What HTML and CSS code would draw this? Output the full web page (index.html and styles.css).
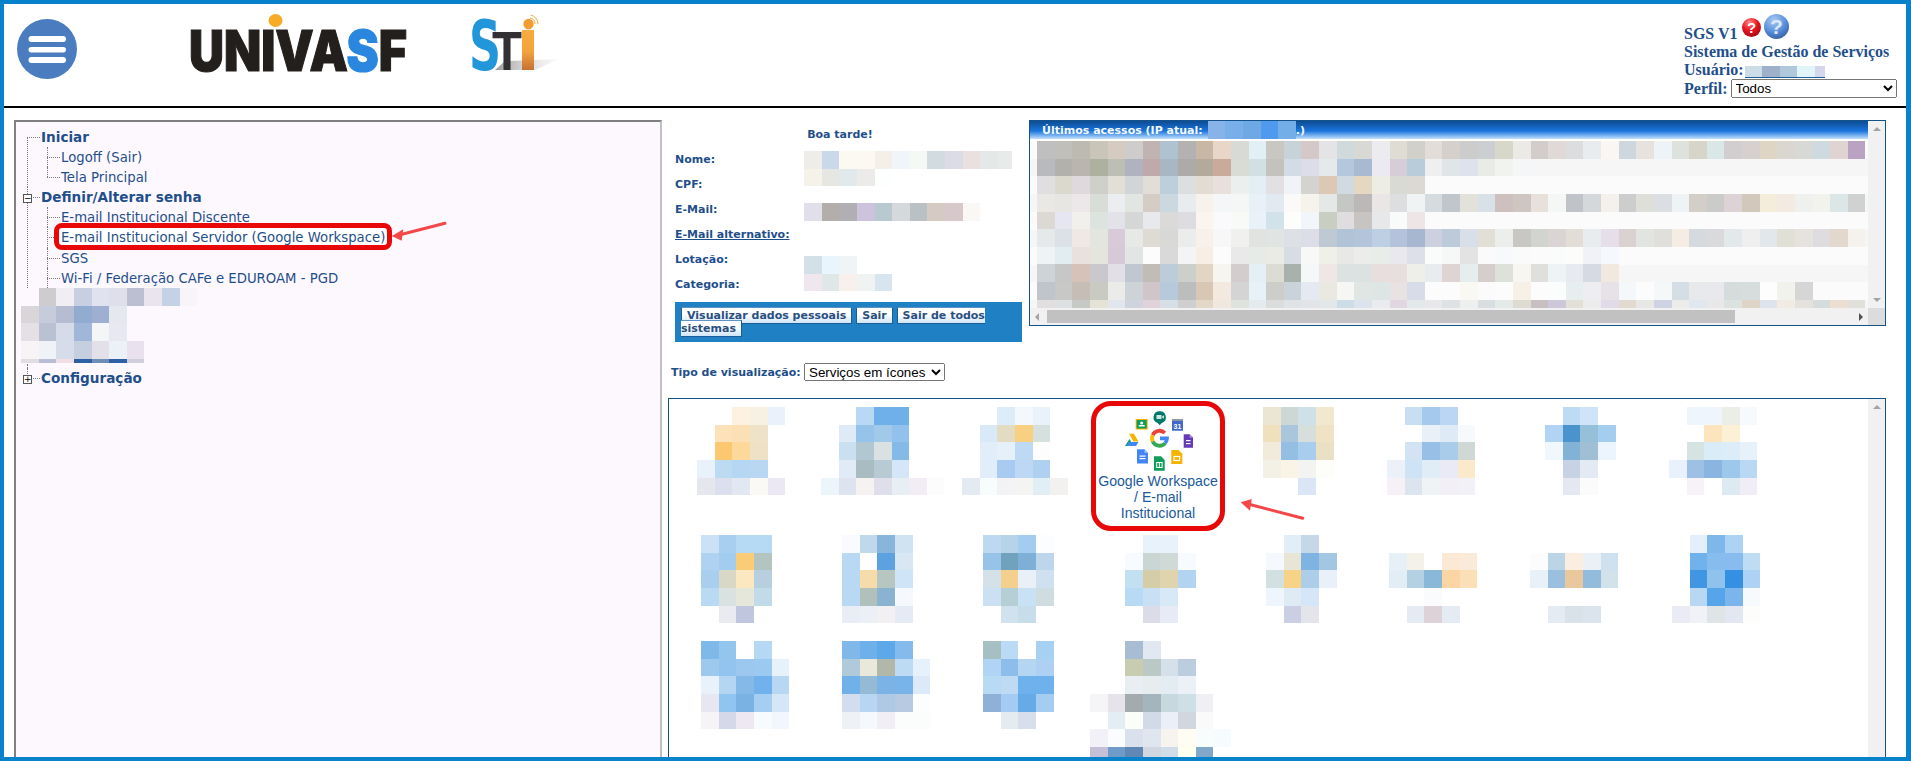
FILE: index.html
```html
<!DOCTYPE html>
<html lang="pt-BR">
<head>
    <meta charset="UTF-8">
    <meta name="viewport" content="width=device-width, initial-scale=1.0">
    <title>SGS - Sistema de Gestão de Serviços</title>
    <link rel="stylesheet" href="styles.css">
</head>
<body>
<div class="frame">
    <!--top bar with menu button, logos and user block-->
    <header class="topbar">
        <svg class="menu-btn" width="60" height="60" viewBox="0 0 60 60">
            <circle cx="30" cy="30" r="30" fill="#4a7cbf"/>
            <rect x="11.500" y="17" width="37.500" height="6" rx="3" fill="#fff"/>
            <rect x="11.500" y="28" width="37.500" height="5.500" rx="2.700" fill="#fff"/>
            <rect x="11.500" y="38" width="37.500" height="6" rx="3" fill="#fff"/>
        </svg>
        <svg class="logo-univasf" width="226" height="62" viewBox="0 0 226 62">
            <ellipse cx="90.500" cy="6.500" rx="7" ry="6.500" fill="#f7ab27"/>
            <text x="4" y="57" class="logo-word" textLength="218" lengthAdjust="spacingAndGlyphs">UNIVA<tspan fill="#2a86de" stroke="#2a86de">S</tspan>F</text>
        </svg>
        <svg class="logo-sti" width="96" height="62" viewBox="0 0 96 62">
            <defs>
                <linearGradient id="stiI" x1="0" y1="0" x2="0" y2="1">
                    <stop offset="0" stop-color="#f9ab3c"/>
                    <stop offset="0.55" stop-color="#f2a33c"/>
                    <stop offset="1" stop-color="#c66f36"/>
                </linearGradient>
                <linearGradient id="stiShadow" x1="0" y1="0" x2="1" y2="0">
                    <stop offset="0" stop-color="#9a9a9a"/>
                    <stop offset="1" stop-color="#e6e6e6" stop-opacity="0.2"/>
                </linearGradient>
            </defs>
            <polygon points="40,47 94,45 70,56 30,56" fill="url(#stiShadow)"/>
            <text x="4" y="56" class="logo-s" textLength="32" lengthAdjust="spacingAndGlyphs">S</text>
            <text x="27" y="56" class="logo-t" textLength="30" lengthAdjust="spacingAndGlyphs">T</text>
            <rect x="57" y="16" width="12" height="40" fill="url(#stiI)"/>
            <circle cx="63.500" cy="10" r="5.200" fill="#f39c32"/>
            <path d="M65 4a6 6 0 0 1 5 6M65.600 1.100a9 9 0 0 1 7.400 8.900" fill="none" stroke="#f3a64a" stroke-width="1"/>
        </svg>
        <div class="sys-info">
            <div class="sys-title">
                <span>SGS V1</span>
                <svg class="help-red" width="19" height="19" viewBox="0 0 19 19">
                    <defs>
                        <radialGradient id="ballRed" cx="0.4" cy="0.25" r="0.8">
                            <stop offset="0" stop-color="#ff8a8a"/>
                            <stop offset="0.5" stop-color="#ea1520"/>
                            <stop offset="1" stop-color="#a00812"/>
                        </radialGradient>
                    </defs>
                    <circle cx="9.500" cy="9.500" r="9.500" fill="url(#ballRed)"/>
                    <text x="9.500" y="15" class="ball-mark">?</text>
                </svg>
                <svg class="help-blue" width="25" height="25" viewBox="0 0 25 25">
                    <defs>
                        <radialGradient id="ballBlue" cx="0.4" cy="0.25" r="0.85">
                            <stop offset="0" stop-color="#a9c9f2"/>
                            <stop offset="0.55" stop-color="#5a8fdc"/>
                            <stop offset="1" stop-color="#2c5595"/>
                        </radialGradient>
                    </defs>
                    <circle cx="12.500" cy="12.500" r="12.500" fill="url(#ballBlue)"/>
                    <text x="12.500" y="20" class="ball-mark ball-big">?</text>
                </svg>
            </div>
            <div>Sistema de Gestão de Serviços</div>
            <div class="sys-row">Usuário: <span class="user-mask"><span class="mosaic" data-m="user"></span></span></div>
            <div class="sys-row">Perfil:
                <select class="profile-select"><option>Todos</option></select>
            </div>
        </div>
    </header>

    <div class="content">
        <!--left menu tree-->
        <nav class="tree-panel">
            <ul class="tree">
                <li class="first"><a class="root-link">Iniciar</a>
                    <ul>
                        <li><a>Logoff (Sair)</a></li>
                        <li class="last"><a>Tela Principal</a></li>
                    </ul>
                </li>
                <li><span class="toggle">−</span><a class="root-link">Definir/Alterar senha</a>
                    <ul>
                        <li><a>E-mail Institucional Discente</a></li>
                        <li><a class="marked">E-mail Institucional Servidor (Google Workspace)</a></li>
                        <li><a>SGS</a></li>
                        <li><a>Wi-Fi / Federação CAFe e EDUROAM - PGD</a></li>
                    </ul>
                </li>
                <li class="masked"><div class="mosaic" data-m="tree"></div></li>
                <li class="last"><span class="toggle">+</span><a class="root-link">Configuração</a></li>
            </ul>
        </nav>

        <main class="workspace">
            <div class="top-row">
                <!--logged user data-->
                <section class="user-box">
                    <div class="greeting">Boa tarde!</div>
                    <div class="data-row"><span class="data-label">Nome:</span><div class="mosaic mask-name" data-m="name"></div></div>
                    <div class="data-row"><span class="data-label">CPF:</span></div>
                    <div class="data-row"><span class="data-label">E-Mail:</span><div class="mosaic mask-mail" data-m="mail"></div></div>
                    <div class="data-row"><a class="data-label alt-mail">E-Mail alternativo:</a></div>
                    <div class="data-row"><span class="data-label">Lotação:</span><div class="mosaic mask-unit" data-m="unit"></div></div>
                    <div class="data-row"><span class="data-label">Categoria:</span></div>
                    <div class="user-actions">
                        <a class="action">Visualizar dados pessoais</a>
                        <a class="action">Sair</a>
                        <a class="action">Sair de todos sistemas</a>
                    </div>
                </section>

                <!--last logins list-->
                <section class="access-panel">
                    <div class="access-main">
                        <div class="access-title">
                            <span>Últimos acessos (IP atual:</span>
                            <div class="mosaic mask-ip" data-m="ip"></div>
                            <span class="ip-end">.)</span>
                        </div>
                        <div class="access-rows"><div class="mosaic" data-m="access"></div></div>
                    </div>
                    <div class="vbar">
                        <span class="arrow-up"></span>
                        <span class="arrow-down"></span>
                    </div>
                    <div class="hbar">
                        <span class="arrow-left"></span>
                        <span class="hbar-thumb"></span>
                        <span class="arrow-right"></span>
                    </div>
                    <div class="corner"></div>
                </section>
            </div>

            <div class="view-type">
                <label>Tipo de visualização:</label>
                <select class="view-select"><option>Serviços em ícones</option></select>
            </div>

            <!--services shown as icons-->
            <section class="services">
                <div class="service-grid">
                    <div class="mosaic" data-m="a1"></div>
                    <div class="mosaic" data-m="a2"></div>
                    <div class="mosaic" data-m="a3"></div>
                    <a class="service-marked">
                        <svg class="workspace-icons" width="72" height="64" viewBox="0 0 72 64">
                            <!--meet-->
                            <path d="M37.700 3.300a6 6 0 0 1 2 11.700l-2 2.200-2-2.200a6 6 0 0 1 2-11.700z" fill="#00796b"/>
                            <rect x="34.500" y="7" width="5" height="4" fill="#cfe8e3"/>
                            <polygon points="39.500,9 42,7.200 42,10.800" fill="#cfe8e3"/>
                            <!--classroom-->
                            <rect x="13.700" y="11" width="12" height="10.500" fill="#f4b400"/>
                            <rect x="14.700" y="12" width="10" height="8.500" fill="#0f9d58"/>
                            <circle cx="19.700" cy="15" r="1.500" fill="#fff"/>
                            <rect x="16.700" y="17" width="6" height="1.500" fill="#fff"/>
                            <!--calendar-->
                            <rect x="50" y="11" width="11" height="11.700" fill="#3f68c9"/>
                            <rect x="50" y="11" width="11" height="2" fill="#8a97ab"/>
                            <text x="55.500" y="21" class="cal-day">31</text>
                            <!--forms-->
                            <path d="M61.700 26.300h6l3.300 3.300v10.100h-9.300z" fill="#673ab7"/>
                            <path d="M67.700 26.300l3.300 3.300h-3.300z" fill="#b39ddb"/>
                            <rect x="64" y="32" width="4.500" height="1.200" fill="#fff"/>
                            <rect x="64" y="35" width="4.500" height="1.200" fill="#fff"/>
                            <!--drive-->
                            <polygon points="7.500,31 9.500,34.500 6,38 3,38" fill="#0f9d58"/>
                            <polygon points="7,25.700 12,25.700 16.500,33.500 11.500,33.500" fill="#f4b400"/>
                            <polygon points="6.500,34 16.500,34 14,38 4.500,38" fill="#4285f4"/>
                            <!--g-->
                            <path d="M42.800 25A7.500 7.500 0 0 0 30.700 27.100" fill="none" stroke="#ea4335" stroke-width="3.800"/>
                            <path d="M30.700 27.100A7.500 7.500 0 0 0 30.700 33.500" fill="none" stroke="#fbbc05" stroke-width="3.800"/>
                            <path d="M30.700 33.500A7.500 7.500 0 0 0 43.200 35.100" fill="none" stroke="#34a853" stroke-width="3.800"/>
                            <path d="M38 30.300H45A7.500 7.500 0 0 1 43.200 35.100" fill="none" stroke="#4285f4" stroke-width="3.800"/>
                            <!--docs-->
                            <path d="M15 41.300h7.500l3.500 3.500v10.700h-11z" fill="#4285f4"/>
                            <path d="M22.500 41.300l3.500 3.500h-3.500z" fill="#a1c2fa"/>
                            <rect x="17.500" y="47.500" width="6" height="1.200" fill="#fff"/>
                            <rect x="17.500" y="50" width="6" height="1.200" fill="#fff"/>
                            <!--sheets-->
                            <path d="M32 48.300h7l3.700 3.700v10.700h-10.700z" fill="#0f9d58"/>
                            <rect x="34.700" y="54.500" width="5.400" height="5" fill="none" stroke="#fff" stroke-width="1"/>
                            <path d="M37.400 54.500v5" stroke="#fff" stroke-width="1"/>
                            <!--slides-->
                            <path d="M49.300 42h7.200l3.800 3.800v10.200h-11z" fill="#f4b400"/>
                            <rect x="52" y="48.500" width="5.600" height="4" fill="none" stroke="#fff" stroke-width="1.200"/>
                        </svg>
                        <span class="service-name">Google Workspace<br>/ E-mail<br>Institucional</span>
                    </a>
                    <div class="mosaic" data-m="a5"></div>
                    <div class="mosaic" data-m="a6"></div>
                    <div class="mosaic" data-m="a7"></div>
                    <div class="mosaic" data-m="a8"></div>

                    <div class="mosaic" data-m="b1"></div>
                    <div class="mosaic" data-m="b2"></div>
                    <div class="mosaic" data-m="b3"></div>
                    <div class="mosaic" data-m="b4"></div>
                    <div class="mosaic" data-m="b5"></div>
                    <div class="mosaic" data-m="b6"></div>
                    <div class="mosaic" data-m="b7"></div>
                    <div class="mosaic" data-m="b8"></div>

                    <div class="mosaic" data-m="c1"></div>
                    <div class="mosaic" data-m="c2"></div>
                    <div class="mosaic" data-m="c3"></div>
                    <div class="mosaic" data-m="c4"></div>
                </div>
                <div class="vbar service-bar"><span class="arrow-up"></span></div>
            </section>
        </main>
    </div>

    <!--red arrows that point at the marked items-->
    <svg class="callout callout-tree" width="62" height="28" viewBox="0 0 62 28">
        <path d="M57 5.300L11 17" stroke="#f4474a" stroke-width="3" stroke-linecap="round"/>
        <polygon points="3.700,18 15.300,11.300 13.700,22.700" fill="#f4474a"/>
    </svg>
    <svg class="callout callout-tile" width="72" height="32" viewBox="0 0 72 32">
        <path d="M66.700 26.300L12 12" stroke="#f4474a" stroke-width="3" stroke-linecap="round"/>
        <polygon points="4.700,10.300 15.700,7 14,18.700" fill="#f4474a"/>
    </svg>
</div>
<script src="mosaic.js"></script>
</body>
</html>
```
FILE: styles.css
```css
/*page frame*/
html, body {
    margin: 0;
    padding: 0;
    height: 100%;
    overflow: hidden;
}

.frame {
    position: relative;
    box-sizing: border-box;
    height: 100vh;
    overflow: hidden;
    background-color: #fff;
    border-style: solid;
    border-color: #0882cb;
    border-width: 4px 5px 4px 4px;
    font-family: "DejaVu Sans", sans-serif;
    color: #1f4f8b;
}

/*blurred out data, cells come from mosaic.js*/
.mosaic {
    display: grid;
    grid-auto-rows: 17.64px;
}

/*top bar*/
.topbar {
    display: flex;
    align-items: flex-start;
    height: 102px;
    border-bottom: 2px solid #000;
}

.menu-btn {
    margin: 15px 0 0 13px;
    flex: none;
}

.logo-univasf {
    margin: 10px 0 0 108px;
    flex: none;
}

.logo-sti {
    margin: 10px 0 0 54px;
    flex: none;
}

.logo-word {
    font-family: "Inter", sans-serif;
    font-weight: 900;
    font-size: 56px;
    fill: #231f1c;
    stroke: #231f1c;
    stroke-width: 1.2px;
}

.logo-s {
    font-family: "DejaVu Sans", sans-serif;
    font-weight: 700;
    font-size: 70px;
    fill: #2196d8;
}

.logo-t {
    font-family: "Liberation Sans", sans-serif;
    font-weight: 700;
    font-size: 55px;
    fill: #333033;
}

.sys-info {
    margin: 10px 0 0 auto;
    width: 222px;
    font-family: "Liberation Serif", serif;
    font-weight: 700;
    font-size: 16px;
    line-height: 18px;
}

.sys-title {
    display: flex;
    align-items: flex-start;
    height: 29px;
}

.sys-title span {
    align-self: flex-end;
}

.help-red {
    margin: 4px 0 0 4px;
}

.help-blue {
    margin-left: 3px;
}

.ball-mark {
    font-family: "Liberation Sans", sans-serif;
    font-weight: 700;
    font-size: 15px;
    text-anchor: middle;
    fill: #fff;
}

.ball-big {
    font-size: 21px;
    fill: #dbe8fa;
}

.sys-row {
    display: flex;
    align-items: center;
    gap: 3px;
}

.user-mask {
    display: block;
    width: 80px;
    height: 11px;
    margin: 3px 0 0 -2px;
    border-bottom: 1px solid #1f5fa8;
    overflow: hidden;
}

.profile-select {
    width: 166px;
    height: 19px;
    font-family: "Liberation Sans", sans-serif;
    font-size: 13.33px;
}

/*main area*/
.content {
    display: flex;
    align-items: flex-start;
    padding: 12px 20px 0 10px;
}

/*menu tree*/
.tree-panel {
    box-sizing: border-box;
    flex: none;
    width: 648px;
    height: 700px;
    padding: 5px 0 0 11px;
    border: 2px solid;
    border-color: #808080 #c0c0c0 #c0c0c0 #808080;
    background-color: #fdf8fe;
    font-size: 13.25px;
}

.tree, .tree ul {
    list-style: none;
    margin: 0;
    padding: 0;
}

.tree li {
    position: relative;
    padding-left: 14px;
    line-height: 20px;
    white-space: nowrap;
}

.tree li::before {
    content: "";
    position: absolute;
    left: 0;
    top: 10px;
    width: 13px;
    border-top: 1px dotted #777;
}

.tree li::after {
    content: "";
    position: absolute;
    left: 0;
    top: 0;
    bottom: 0;
    border-left: 1px dotted #777;
}

.tree li.first::after {
    top: 10px;
}

.tree li.last::after {
    bottom: auto;
    height: 10px;
}

.tree a {
    display: block;
}

.tree ul {
    margin-left: 6px;
}

.tree ul a {
    height: 20px;
    line-height: 22px;
}

.tree li.masked {
    height: 80px;
    margin-left: -6px;
    padding-left: 0;
    line-height: 0;
}

.tree li.masked::before {
    display: none;
}

.tree li.masked::after {
    left: 6px;
    top: 76px;
}

.tree li.masked .mosaic {
    height: 75px;
    overflow: hidden;
}

.tree .root-link {
    font-weight: 700;
    font-size: 13.6px;
}

.toggle {
    position: absolute;
    z-index: 1;
    left: -4px;
    top: 7px;
    box-sizing: border-box;
    width: 9px;
    height: 9px;
    border: 1px solid #555;
    background-color: #fff;
    color: #000;
    font-size: 9px;
    line-height: 7px;
    text-align: center;
}

.tree .marked {
    position: relative;
    z-index: 0;
    display: inline-block;
}

.marked::after {
    content: "";
    position: absolute;
    z-index: -1;
    inset: -4px -7px -3px -7px;
    border: 5px solid #e80808;
    border-radius: 8px;
    background-color: #fff;
}

/*right side*/
.workspace {
    flex: 1;
    min-width: 0;
    padding-left: 6px;
}

.top-row {
    display: flex;
    align-items: flex-start;
    height: 222px;
    margin-left: 7px;
    gap: 7px;
}

.user-box {
    flex: none;
    width: 347px;
    font-size: 11px;
    font-weight: 700;
}

.greeting {
    height: 26px;
    padding-right: 17px;
    line-height: 29px;
    text-align: center;
}

.data-row {
    display: flex;
    align-items: flex-start;
    height: 25px;
    line-height: 27px;
}

.data-label {
    flex: none;
    width: 129px;
}

.alt-mail {
    text-decoration: underline;
}

.mask-name {
    width: 208px;
    margin-top: 5px;
    overflow: hidden;
}

.mask-mail {
    margin-top: 7px;
}

.mask-unit {
    margin-top: 10px;
}

.user-actions {
    box-sizing: border-box;
    height: 40px;
    margin-top: 6px;
    padding: 7px 6px;
    background-color: #1f80c4;
    line-height: 13px;
}

.action {
    padding: 1px 5px;
    border: 1px solid #1c5c98;
    border-top-color: #5c92c4;
    background: linear-gradient(#ffffff 40%, #cfe5f8);
    color: #2a4f80;
}

.access-panel {
    box-sizing: border-box;
    flex: none;
    display: grid;
    grid-template-columns: 1fr 17px;
    grid-template-rows: 1fr 17px;
    width: 857px;
    height: 206px;
    border: 1px solid #14528c;
}

.access-main {
    min-width: 0;
    overflow: hidden;
}

.access-title {
    display: flex;
    align-items: center;
    height: 18px;
    padding-left: 12px;
    background: linear-gradient(#0d4c90, #1a74de 55%, #c2e0fc);
    color: #f4f9ff;
    font-size: 11px;
    font-weight: 700;
}

.mask-ip {
    margin-left: 5px;
}

.access-rows {
    height: 170px;
    margin-top: 2px;
    padding-left: 7px;
    overflow: hidden;
    background: repeating-linear-gradient(#fbfbfb 0 18px, #f6f6f6 18px 35.3px);
}

.vbar {
    display: flex;
    flex-direction: column;
    justify-content: space-between;
    align-items: center;
    padding: 6px 0;
    box-sizing: border-box;
    background-color: #f1f1f1;
}

.arrow-up, .arrow-down {
    width: 0;
    height: 0;
    border-left: 4px solid transparent;
    border-right: 4px solid transparent;
}

.arrow-up {
    border-bottom: 4px solid #a3a3a3;
}

.arrow-down {
    border-top: 4px solid #a3a3a3;
}

.hbar {
    display: flex;
    align-items: center;
    background-color: #f1f1f1;
}

.arrow-left, .arrow-right {
    width: 0;
    height: 0;
    border-top: 4px solid transparent;
    border-bottom: 4px solid transparent;
}

.arrow-left {
    margin-left: 5px;
    border-right: 4px solid #a3a3a3;
}

.hbar-thumb {
    width: 688px;
    height: 13px;
    margin-left: 8px;
    background-color: #c1c1c1;
}

.arrow-right {
    margin-left: auto;
    margin-right: 5px;
    border-left: 4px solid #505050;
}

.corner {
    background-color: #dcdcdc;
}

.view-type {
    display: flex;
    align-items: center;
    height: 18px;
    margin: 21px 0 17px 3px;
    font-size: 11px;
    font-weight: 700;
}

.view-type label {
    width: 133px;
}

.view-select {
    width: 141px;
    height: 18px;
    font-family: "Liberation Sans", sans-serif;
    font-size: 13.33px;
}

/*services list*/
.services {
    display: flex;
    height: 400px;
    border: 1px solid #14528c;
    overflow: hidden;
}

.service-grid {
    flex: 1;
    display: grid;
    grid-template-columns: repeat(8, 141px);
    grid-template-rows: 128px 106px 120px;
    align-items: start;
    justify-items: start;
    padding: 8px 0 0 1px;
}

.service-bar {
    flex: none;
    width: 17px;
    justify-content: flex-start;
}

.service-marked {
    box-sizing: border-box;
    display: flex;
    flex-direction: column;
    align-items: center;
    width: 134px;
    height: 130px;
    margin: -6px 0 0 -2px;
    padding-top: 2px;
    border: 5px solid #e80808;
    border-radius: 20px;
    font-family: "Liberation Sans", sans-serif;
}

.workspace-icons {
    flex: none;
}

.cal-day {
    font-family: "Liberation Sans", sans-serif;
    font-size: 7px;
    font-weight: 700;
    text-anchor: middle;
    fill: #fff;
}

.service-name {
    margin-top: 1px;
    font-size: 14.1px;
    line-height: 16px;
    text-align: center;
    white-space: nowrap;
    color: #1a5a9e;
}

/*annotations*/
.callout {
    position: absolute;
}

.callout-tree {
    left: 384px;
    top: 214px;
}

.callout-tile {
    left: 1232px;
    top: 488px;
}
```
FILE: mosaic.js
```js
//colour cells of the blurred out data, "." is an empty cell
const mosaics = {
    user: { rows: ['ccdde8 9fb0cb b0c8dc e1f5f8 d4d7ec'] },
    tree: { rows: [
        '. cfcccf f0eef3 c9cfe2 e0e3ef dedfea bcbfd2 eae4ee c5d2e6 f7f5f9',
        'd9d5d8 c6ccdc b6bdd3 92abd0 9eafd1 e6e8f0',
        'e5e0e6 b9c1d3 d5dbe8 a0b7d9 f4f5f7 e8e8f2',
        'f8f4f6 eff2f7 d7dcea c6cfe0 e4e0e9 ebf1f7 e9e2ee',
        'e2dde2 b8bfd4 f1dfe6 2d5fa5 6e8eb5 2d5fa5 d0cddc'
    ] },
    name: { rows: [
        'eeede9 c9d9ea fcf9f3 fcf9f3 f5efea f0f5f9 f5f9f6 d2dce0 dcdce6 e9e0df e5e8e9 e8ebea',
        'f5f2ea e6e6e3 e2e9ed ecebe9 fdfefe'
    ] },
    mail: { rows: ['e1dfea b3aeaa b1afb3 cdc3dd b8c9d0 d5d9dc b9c1c4 d5cbc4 d7c9cb fbf7f4'] },
    unit: { rows: [
        'd3e0e7 e9f5fc eff4f7',
        'efe6ee e0e7e7 f8f0ec eff3f1 d9e5ee'
    ] },
    ip: { rows: ['87b3e9 78aeea 6ea8e5 4f9aec 74aee6'] },
    access: { rows: [
        'bfbfc0 c0bfba bdbab2 c9c6b9 d5cbc0 cfcdcc c0b3b1 aec2d0 b4b2b0 c9b7a5 e8d6c9 d8dad6 e2eff5 c8c7c1 c8d2d9 d4c8c8 e4e4e6 d0dadc d8d9d5 ecebef dedcd3 d1d0ca e2ddd8 d5d0cb cccccc cbcfd2 d7d7ca ebeae6 d2cdca e1d8d8 dcdddf e8ecef f9f6f3 ced7de e7e2de eef3f7 dde2dc d7d5c9 d9e8e7 d2cdce d6d1ce dfd5c5 dad7d1 d6d9d5 cfdae0 dfd4d2 baa2c3',
        'b8babd b2b1ab bab5af aeb0a0 bdbeb6 b0b3bf bfa9ab a9b6c3 aeaaa8 b3aa9c c9aa9b d8dcd4 d2e0e3 c3c2bd d2dbe6 dcdde8 e6e9ec b3c8dc a8bad2 ebeaf0 d7cdd8 b7cdda efefef e0e5e7 dde2ec e9ebe7 f1f3ee f5f6f8',
        'e0dede dbd9ce dfd9dd ced0c9 e2dfd7 d1d5d7 e3ddd7 bccfdb dcdee0 e3dcd2 e9dfdb ebf0ee e4eff5 e3e0e3 f0f3f7 d5d3cf dcc8b5 d1dae1 e5d8c2 eeede3 d9dad3 dcd9d2',
        'eae8e5 e8e6e2 ece8ea d9ddd8 ecedf1 e1e6e3 d5ccc6 cbd8df e8ecee f7f2ec f5f6f8 f4f7f6 e9f1f8 e2e9f0 fbfaf8 f6f3ec e4e8e7 c5c7c5 bcb8b8 ebe6e6 dddee0 f0f3f3 d6dbdf c0c6cc e2e2da d9e1e8 cfc0c0 d0c6c1 e8e0db f4f7f6 c0c3c7 d4d8db f4f1ec cdcdce dfdfda dbdee2 eef3f6 d3cfc8 cbccc9 ddd2d5 d2c8bc f4edda f3ebe2 eff1ef f2f3ec dde6e7 cfd2d0',
        'dcd8d4 e6e6f2 f1f0ec dde4df e2e2e8 d4d7d6 e8e9ed dbdad8 dddde1 fbf5ef fafafc f7faf7 e9f1f9 d2e2ea fdfdfc f2f6fb c9cec3 dfdde0 c7c4c1 e6e8ea f9fbfb eee6e6',
        'e6e9e9 dbe0e9 efe8e4 e3e6de d9cad9 e6e9e6 dedbd4 d8d8d6 ebecec f8f0ea f7f7f7 f0f0ee e0e3e0 e0e4e3 dde1e5 dddde8 bfc9d3 b1c4d7 b4c4da bdcfe3 b4c3db a6b7cf cdd0de bccada d8dfe9 e2dfd6 ebeeeb c9c7c3 d1d4cf dad5d4 e2ddd7 e8ecee e6dfe9 d9d2d0 e2e4e2 e0dfdc f5ece4 d4dadd dadadc e3e8ea efefef e2e7eb e0e0d7 e6e2de dfdcdf e2d8cd f5f2ed',
        'eef3f6 e1edf1 eae0dc e4e6de d8c9d9 e1e5e3 fcfcfc d8d9d8 f3f4f5 f7efe6 fdfcfc e9e9e9 e6ebe8 ebebe5 d7dde3 f7f8f7 eff0e8 e8e8e6 ecedeb e9edea e9e9ed dde0e9 fafbfb f6f8f7 e3e3e3 fafafa f7f9fa fafafa fbfbfb fafcfb fcfcfb f1f2f7 f5f9fd',
        'cdd3d7 c6c7c6 d6c2b8 c8c8cd e2e0e6 c0c7d1 c2bcb6 bccdd9 cdcfca e2d5c4 f7f5f0 d3cdcd e5f0f6 dcdcd4 a8b1ac f5f8f8 efe7e6 dce2e2 dce2e1 e8dedd e8dede eeefe8 e8ecef dfd4d4 e5edef d6cecc dee0da f7f6f1 dfe0db eef3f6 e7ebef d4dbe2 f1e8e0',
        'c0c5cc c8c9c6 c6bdb6 c9cac2 ebebe9 cdd3d7 d0c5c8 b6cadb bcbdbd d8c7b5 f4e9df d4d4d4 e6f2f8 cdcdc9 cad3da e5e9f1 e9e9e2 f6f6f4 dfe6e3 dde5e5 e8e2e3 d8dbe8 fcfcfc fcfcfc f9f8f3 fbfbfb fcfcfc f6f0e6 fcfcfc fbfcfc e7eef0 eeedf2 e6e2e8 f4f8fa fcfcfc f4f8f9 d6dee5 e7e9eb e9e9ed d5dcdb d7dddc fcfdfc f2f2ec d6d6d6',
        'e1dfe0 dee1e2 c6c9c6 e5e3d5 e1e6ee ced3de e1d2da d6dee6 cfcfcf e3d7c8 f0e8df e0e2e0 e3ebee dbdcdc dfe3e6 e2e4ea e2e7ea cddde7 dce3ec eaebee e1d7e3 e2e9e8 e8e8ea dfe2e5 eef0ef d9dee0 e3eae8 dedcd2 c7bfc0 ccc8d9 e3e1d7 ececec e1dbe9 e2dace e7e8e5 cfd2e3 ececea e0e7ee e8e8e8 dce2e0 ded5c8 dee3ee f1ebe4 e4e2dc d6dcdc ecdfd2 e2e0da'
    ] },
    a1: { dx: 27, rows: [
        '. . fdf2e2 f7f1e3 e9f2fa',
        '. fbe2b8 fbe0b6 eee2c8 .',
        '. fbc76f fcd99b eee1c5 .',
        'e9f2fb bcdaf1 b5d7f4 b9d7f3 .',
        'e6e6ee dbdfee e2e8f2 faf9f6 ebe8f3'
    ] },
    a2: { dx: 10, rows: [
        '. . b9d8f4 6fb0ea 6fb0ea . .',
        '. deeaf5 96c3e9 a0c9ea 91c1ec . .',
        '. cadff0 b1c8d2 d9e1e2 85b9e8 . .',
        '. e0ebf7 a9bcc2 b8cbd4 d6e6f9 . .',
        'ebf5fa dde3ef f6f2f1 dfdeeb e7eff4 f2edf4 fbfcfb'
    ] },
    a3: { dx: 10, rows: [
        '. . dcecf8 f3f8fd e9f1fb .',
        '. d9e9f7 e3dcc2 f9cf82 d6e0df .',
        '. e1eefa e5f0f9 bdd9f4 fdfdfd .',
        '. e1edf9 a9cbf2 bdd8f5 afd0f1 .',
        'e4eaf2 f7fcfc f3f2f4 f4f4f3 e2eef6 f3f0f0'
    ] },
    a5: { dx: 29, rows: [
        'ebe5d3 ccd7d6 cfe0e8 f2e7cf',
        'f0e1bd a8c6dc d6dfdc f0e2c4',
        'f2ebdb 92bfe2 a9cdec e9e0c6',
        'f3f1e6 f9f4e5 f3f3f1 fdfdfa',
        '. . dae6f6 .'
    ] },
    a6: { dx: 12, rows: [
        '. c8def3 a5c9ed bad6f4 .',
        '. . e9f0f8 deeaf6 f6fafd',
        '. d2e3f4 98c0e6 a9cceb d0d8d6',
        'ecf0f8 cee4f6 e0ecf6 e9eaf6 fbe9cb',
        'f6f1f6 dce5ef f0f3f5 f2f0f6 f2f1f7'
    ] },
    a7: { dx: 29, rows: [
        '. bedbf6 cfe3f9 .',
        'b1d4f4 4a93cc 96bfda a5cdf0',
        'f0f7fd 82b2d6 a0bfd5 ecf4fd',
        '. c7d3e5 e4eaf4 .',
        '. e6e8f1 fbfbfc .'
    ] },
    a8: { dx: 12, rows: [
        '. eef5fc eef5fc ebeee6 f6fafd',
        '. . fce5bd fcf0d6 .',
        '. d6e3e3 dbecf9 dcecf9 e7f1f9',
        'e9f2fc 9fc0e5 8ab5e1 9dc7eb b9d8f4',
        '. f6f2f7 . deeaf1 f0edf7'
    ] },
    b1: { dx: 31, rows: [
        'cbe1f5 a9cff0 b6d9f4 b6d9f4',
        'afd2f2 a3cdf0 fbcc78 b4c4c0',
        'a9cfee d9d8c6 fce8c0 b8cfdf',
        'b9daf2 d9e1e1 e6e7db c1dbe8',
        '. e9ebf0 c0c6dd .'
    ] },
    b2: { dx: 31, rows: [
        'f9fbfe c0d9ea 88b5da d0e3f3',
        'b9d8f4 . 5ca2e0 d9e7f3',
        'b9d8f4 f5dcaa b7c6c0 cfe4f6',
        'b9d8f4 b0c0ba 89b3d0 f5f9fd',
        'e9edf6 edeff7 f2f0f3 e4ebf4'
    ] },
    b3: { dx: 31, rows: [
        'bdd8f0 b6d3ea a3cdf0 fbfdfe',
        '98c3e8 70a2bd 7eb0d7 bcd7ec',
        'd5e1e8 f3d08e e9f0f7 cfe1f1',
        'cce0f4 b6ced6 c9e1f5 d0dde0',
        '. d0e2ed c7dde9 .'
    ] },
    b4: { dx: 32, rows: [
        '. e8f2fb e8f2fb .',
        'f7fafe c9d6d4 cfd9d6 f7fafe',
        'c3dff2 d5cca8 e0d4ae b2d4f1',
        'b8daf4 c8dff4 d7e8f7 .',
        '. dcdce8 e6ebf5 .'
    ] },
    b5: { dx: 32, rows: [
        '. e1edf7 c5d8e8 .',
        'f5f8fc e8e5d6 7fb4e2 a3c6e2',
        'd3e0e1 f6d386 accee8 e9f0fa',
        'eff5fc deeaf4 d5e6f8 .',
        '. cbcfe3 e3e5eb .'
    ] },
    b6: { dx: 14, rows: [
        '. . . . .',
        'e7eff7 f4f2e8 . fce9d3 faeada',
        'e3edf6 b4d1e3 8ab8d9 fbd5a3 fbdfb6',
        '. . f9fbfc . .',
        '. e5ebf3 dcd2d7 e5ebf2 .'
    ] },
    b7: { dx: 14, rows: [
        '. . . . .',
        'fbfcfb bbd4e6 fbeee0 e9f1f6 cfe1ee',
        'e9f1f8 9abfdf e8c89c 93bbdc d2e2eb',
        '. . . . .',
        '. e5ebf3 d8e2e8 dbe3ec .'
    ] },
    b8: { dx: 15, rows: [
        '. e3effa 7eb8ea acd3f3 .',
        '. 70b2ec 86bcee 89bcee bfdcf5',
        '. 4096e2 90c2ee 3490e2 aed2f5',
        '. b7d7f3 56a5e8 7ab5ec f6fafd',
        'ebebf5 f1f2f7 dfe5e7 e2e7f2 fdfdfb'
    ] },
    c1: { dx: 31, rows: [
        '7fb9ea 94c5ec . b5d8f4 .',
        '9ec9ee 92c4ef 9cc8ef 9cc9f0 e7f1fa',
        'e9f2fb b5d6f2 85b9e8 71b1ec b8d7f3',
        'e5e7f1 90c5f2 7ab2e4 a6cef2 d5e6f7',
        'f6f4f6 d4d9ea eee9f0 f8fbfe f1f7fd'
    ] },
    c2: { dx: 31, rows: [
        '81b8ea 6eb0ea 5ca8e8 85baec .',
        'b0cadb e9e8da b1b8aa bddbf3 e7f1fb',
        '71b1ea 95bad6 7cb3e6 78b4ea dbe9f9',
        'd2ddef b8d5f4 aec8e6 b8c9e2 fcfefe',
        'eef2f6 f5f9fd f2eef5 fbfdfd fbfdfd'
    ] },
    c3: { dx: 31, rows: [
        'a6bfc2 bbdaf5 . a7d1f3',
        'b1d3f4 8cbdeb b5d6f3 add0f3',
        'b9daf5 bfdbf3 6fb1ec 6fb1ec',
        '8fb1d8 a4cbf3 66abe8 a5cdf2',
        '. e4ebf1 d7dfec .'
    ] },
    c4: { dx: -3, rows: [
        '. . a8bcd4 e2e8f1 . . . .',
        '. . c8ccb0 bbc9c6 d6e0eb bccde0 . .',
        '. . e9eef2 e7ecef e2ecf2 ebf1f7 . .',
        'f5f4f7 e7e3ea a4abaf a5b5be c8d8df cee0e5 f0eff4 .',
        '. e2eef3 fbfdf9 d3dae7 ebeff8 d2d6de fafafa .',
        'f2f1f8 fafcfd dae1ed dfe6ef f7f4ef fffcf4 f8fcfd f6fcfe',
        'c5bfd8 6f9bc8 6187b5 d0d7e0 d0dde8 fffff0 81a8c8 .'
    ] }
};

//fill every mosaic element with its cells
document.querySelectorAll('.mosaic').forEach(el => {
    const data = mosaics[el.dataset.m];
    const rows = data.rows.map(row => row.split(' '));
    const cols = Math.max(...rows.map(row => row.length));

    el.style.gridTemplateColumns = `repeat(${cols}, 17.64px)`;
    if (data.dx) {
        el.style.marginLeft = `${data.dx}px`;
    }

    rows.forEach(row => {
        for (let i = 0; i < cols; i++) {
            const cell = document.createElement('span');
            if (row[i] && row[i] !== '.') {
                cell.style.backgroundColor = `#${row[i]}`;
            }
            el.appendChild(cell);
        }
    });
});
```
